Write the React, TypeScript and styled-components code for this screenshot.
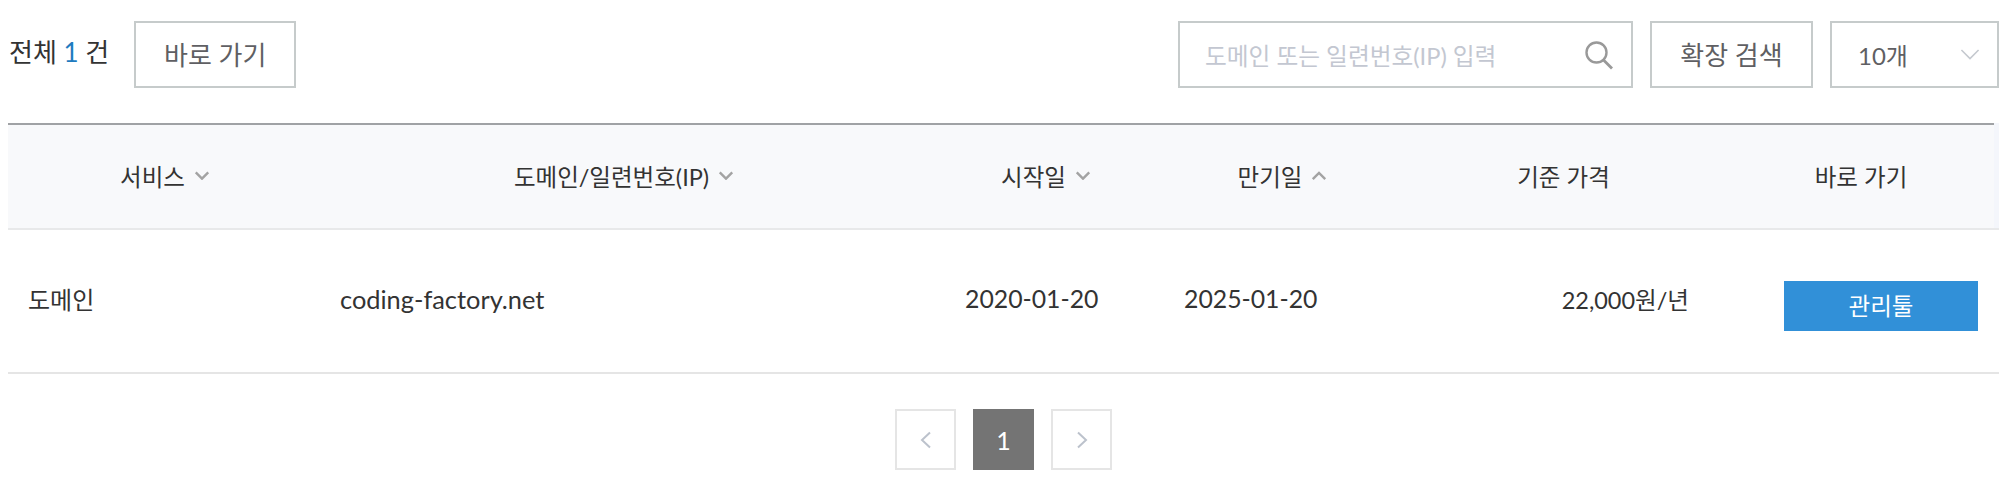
import React from 'react'
import styled, { createGlobalStyle } from 'styled-components'

const GlobalStyle = createGlobalStyle`
  html, body {
    margin: 0;
    padding: 0;
    background: #fff;
  }
  body {
    font-family: Lato, 'Noto Sans CJK KR', 'Noto Sans', sans-serif;
    color: #333;
  }
`

const COLUMNS = '314px 604px 240px 233px 329px 1fr'

const Page = styled.div`
  width: 2012px;
  height: 489px;
  overflow: hidden;
`

const Toolbar = styled.div`
  display: flex;
  align-items: center;
  height: 67px;
  margin-top: 21px;
  padding: 0 13px 0 9px;
`

const Total = styled.div`
  font-size: 26px;
  line-height: 34px;
  margin: 0 25px 6px 0;
  white-space: nowrap;
`

const TotalCount = styled.span`
  color: #1f7bbf;
`

const OutlineButton = styled.button<{ $width: number }>`
  width: ${p => p.$width}px;
  height: 67px;
  padding: 0 0 2px;
  background: #fff;
  border: 2px solid #c6cbcb;
  border-radius: 0;
  font-family: inherit;
  font-size: 26px;
  color: #5f5f63;
`

const RightTools = styled.div`
  display: flex;
  gap: 17px;
  margin-left: auto;
`

const SearchBox = styled.div`
  display: flex;
  align-items: center;
  justify-content: space-between;
  box-sizing: border-box;
  width: 455px;
  height: 67px;
  padding: 0 17px 0 25px;
  border: 2px solid #c6cbcb;
`

const SearchPlaceholder = styled.span`
  font-size: 23.7px;
  color: #c3c7d1;
`

const SelectBox = styled.div`
  display: flex;
  align-items: center;
  justify-content: space-between;
  box-sizing: border-box;
  width: 169px;
  height: 67px;
  padding: 0 16px 0 26px;
  border: 2px solid #c6cbcb;
  font-size: 24px;
  color: #5f5f63;
`

const Table = styled.div`
  width: 1991px;
  margin: 35px 0 0 8px;
`

const HeaderStrip = styled.div`
  background: #f4f6fb;
  border-bottom: 2px solid #e8e9ea;
`

const HeaderRow = styled.div`
  display: grid;
  grid-template-columns: ${COLUMNS};
  height: 103px;
  margin-right: 5px;
  align-items: center;
  background: #f8f9fb;
  border-top: 2px solid #a0a2a5;
`

const HeaderCell = styled.div`
  display: flex;
  align-items: center;
  justify-content: center;
  gap: 9px;
  padding-bottom: 2px;
  font-size: 23.5px;
  white-space: nowrap;
`

const BodyRow = styled.div`
  display: grid;
  grid-template-columns: ${COLUMNS};
  height: 142px;
  align-items: center;
  border-bottom: 2px solid #e5e5e5;
`

const BodyCell = styled.div<{ $pad?: number; $right?: boolean; $size?: number }>`
  font-size: ${p => p.$size ?? 24}px;
  white-space: nowrap;
  padding-bottom: 5px;
  padding-left: ${p => (p.$right ? 0 : p.$pad ?? 20)}px;
  padding-right: ${p => (p.$right ? p.$pad ?? 0 : 0)}px;
  text-align: ${p => (p.$right ? 'right' : 'left')};
`

const ActionCell = styled.div`
  padding: 10px 0 0 56px;
`

const ManageButton = styled.button`
  display: block;
  width: 194px;
  height: 50px;
  padding: 0 0 2px;
  background: #3190d8;
  border: 0;
  border-radius: 0;
  font-family: inherit;
  font-size: 23.5px;
  color: #fff;
`

const Pager = styled.div`
  display: flex;
  justify-content: center;
  gap: 17px;
  margin-top: 35px;
`

const PageButton = styled.div<{ $active?: boolean }>`
  display: flex;
  align-items: center;
  justify-content: center;
  box-sizing: border-box;
  width: 61px;
  height: 61px;
  font-size: 25px;
  color: #fff;
  background: ${p => (p.$active ? '#747474' : '#fff')};
  border: ${p => (p.$active ? '0' : '2px solid #e5e5e5')};
`

const Chevron = ({ up, size = 16, color = '#a3a3a3', weight = 2.4 }: { up?: boolean; size?: number; color?: string; weight?: number }) => (
  <svg width={size} height={size * 0.6} viewBox="0 0 16 10" fill="none">
    <path
      d={up ? 'M1.5 8.5 L8 2 L14.5 8.5' : 'M1.5 1.5 L8 8 L14.5 1.5'}
      stroke={color}
      strokeWidth={weight}
      vectorEffect="non-scaling-stroke"
    />
  </svg>
)

const SideArrow = ({ right }: { right?: boolean }) => (
  <svg width="12" height="18" viewBox="0 0 12 18" fill="none">
    <path d={right ? 'M2 1.5 L10 9 L2 16.5' : 'M10 1.5 L2 9 L10 16.5'} stroke="#bcc2cc" strokeWidth="2" />
  </svg>
)

const SearchIcon = () => (
  <svg width="30" height="30" viewBox="0 0 30 30" fill="none">
    <circle cx="12.5" cy="12.5" r="10" stroke="#999" strokeWidth="2.4" />
    <path d="M19.5 20 L28 28.5" stroke="#999" strokeWidth="2.8" />
  </svg>
)

export default function App() {
  return (
    <Page>
      <GlobalStyle />
      <Toolbar>
        <Total>
          전체 <TotalCount>1</TotalCount> 건
        </Total>
        <OutlineButton $width={162}>바로 가기</OutlineButton>
        <RightTools>
          <SearchBox>
            <SearchPlaceholder>도메인 또는 일련번호(IP) 입력</SearchPlaceholder>
            <SearchIcon />
          </SearchBox>
          <OutlineButton $width={163}>확장 검색</OutlineButton>
          <SelectBox>
            10개
            <Chevron size={22} color="#c5c9cf" weight={1.6} />
          </SelectBox>
        </RightTools>
      </Toolbar>
      <Table>
        <HeaderStrip>
          <HeaderRow>
            <HeaderCell>
              서비스 <Chevron />
            </HeaderCell>
            <HeaderCell>
              도메인/일련번호(IP) <Chevron />
            </HeaderCell>
            <HeaderCell>
              시작일 <Chevron />
            </HeaderCell>
            <HeaderCell>
              만기일 <Chevron up />
            </HeaderCell>
            <HeaderCell>기준 가격</HeaderCell>
            <HeaderCell>바로 가기</HeaderCell>
          </HeaderRow>
        </HeaderStrip>
        <BodyRow>
          <BodyCell>도메인</BodyCell>
          <BodyCell $pad={18} $size={25.4}>
            coding-factory.net
          </BodyCell>
          <BodyCell $pad={39} $size={24.8}>
            2020-01-20
          </BodyCell>
          <BodyCell $pad={18} $size={24.8}>
            2025-01-20
          </BodyCell>
          <BodyCell $right $pad={39} $size={23.5}>
            22,000원/년
          </BodyCell>
          <ActionCell>
            <ManageButton>관리툴</ManageButton>
          </ActionCell>
        </BodyRow>
        <Pager>
          <PageButton>
            <SideArrow />
          </PageButton>
          <PageButton $active>1</PageButton>
          <PageButton>
            <SideArrow right />
          </PageButton>
        </Pager>
      </Table>
    </Page>
  )
}
